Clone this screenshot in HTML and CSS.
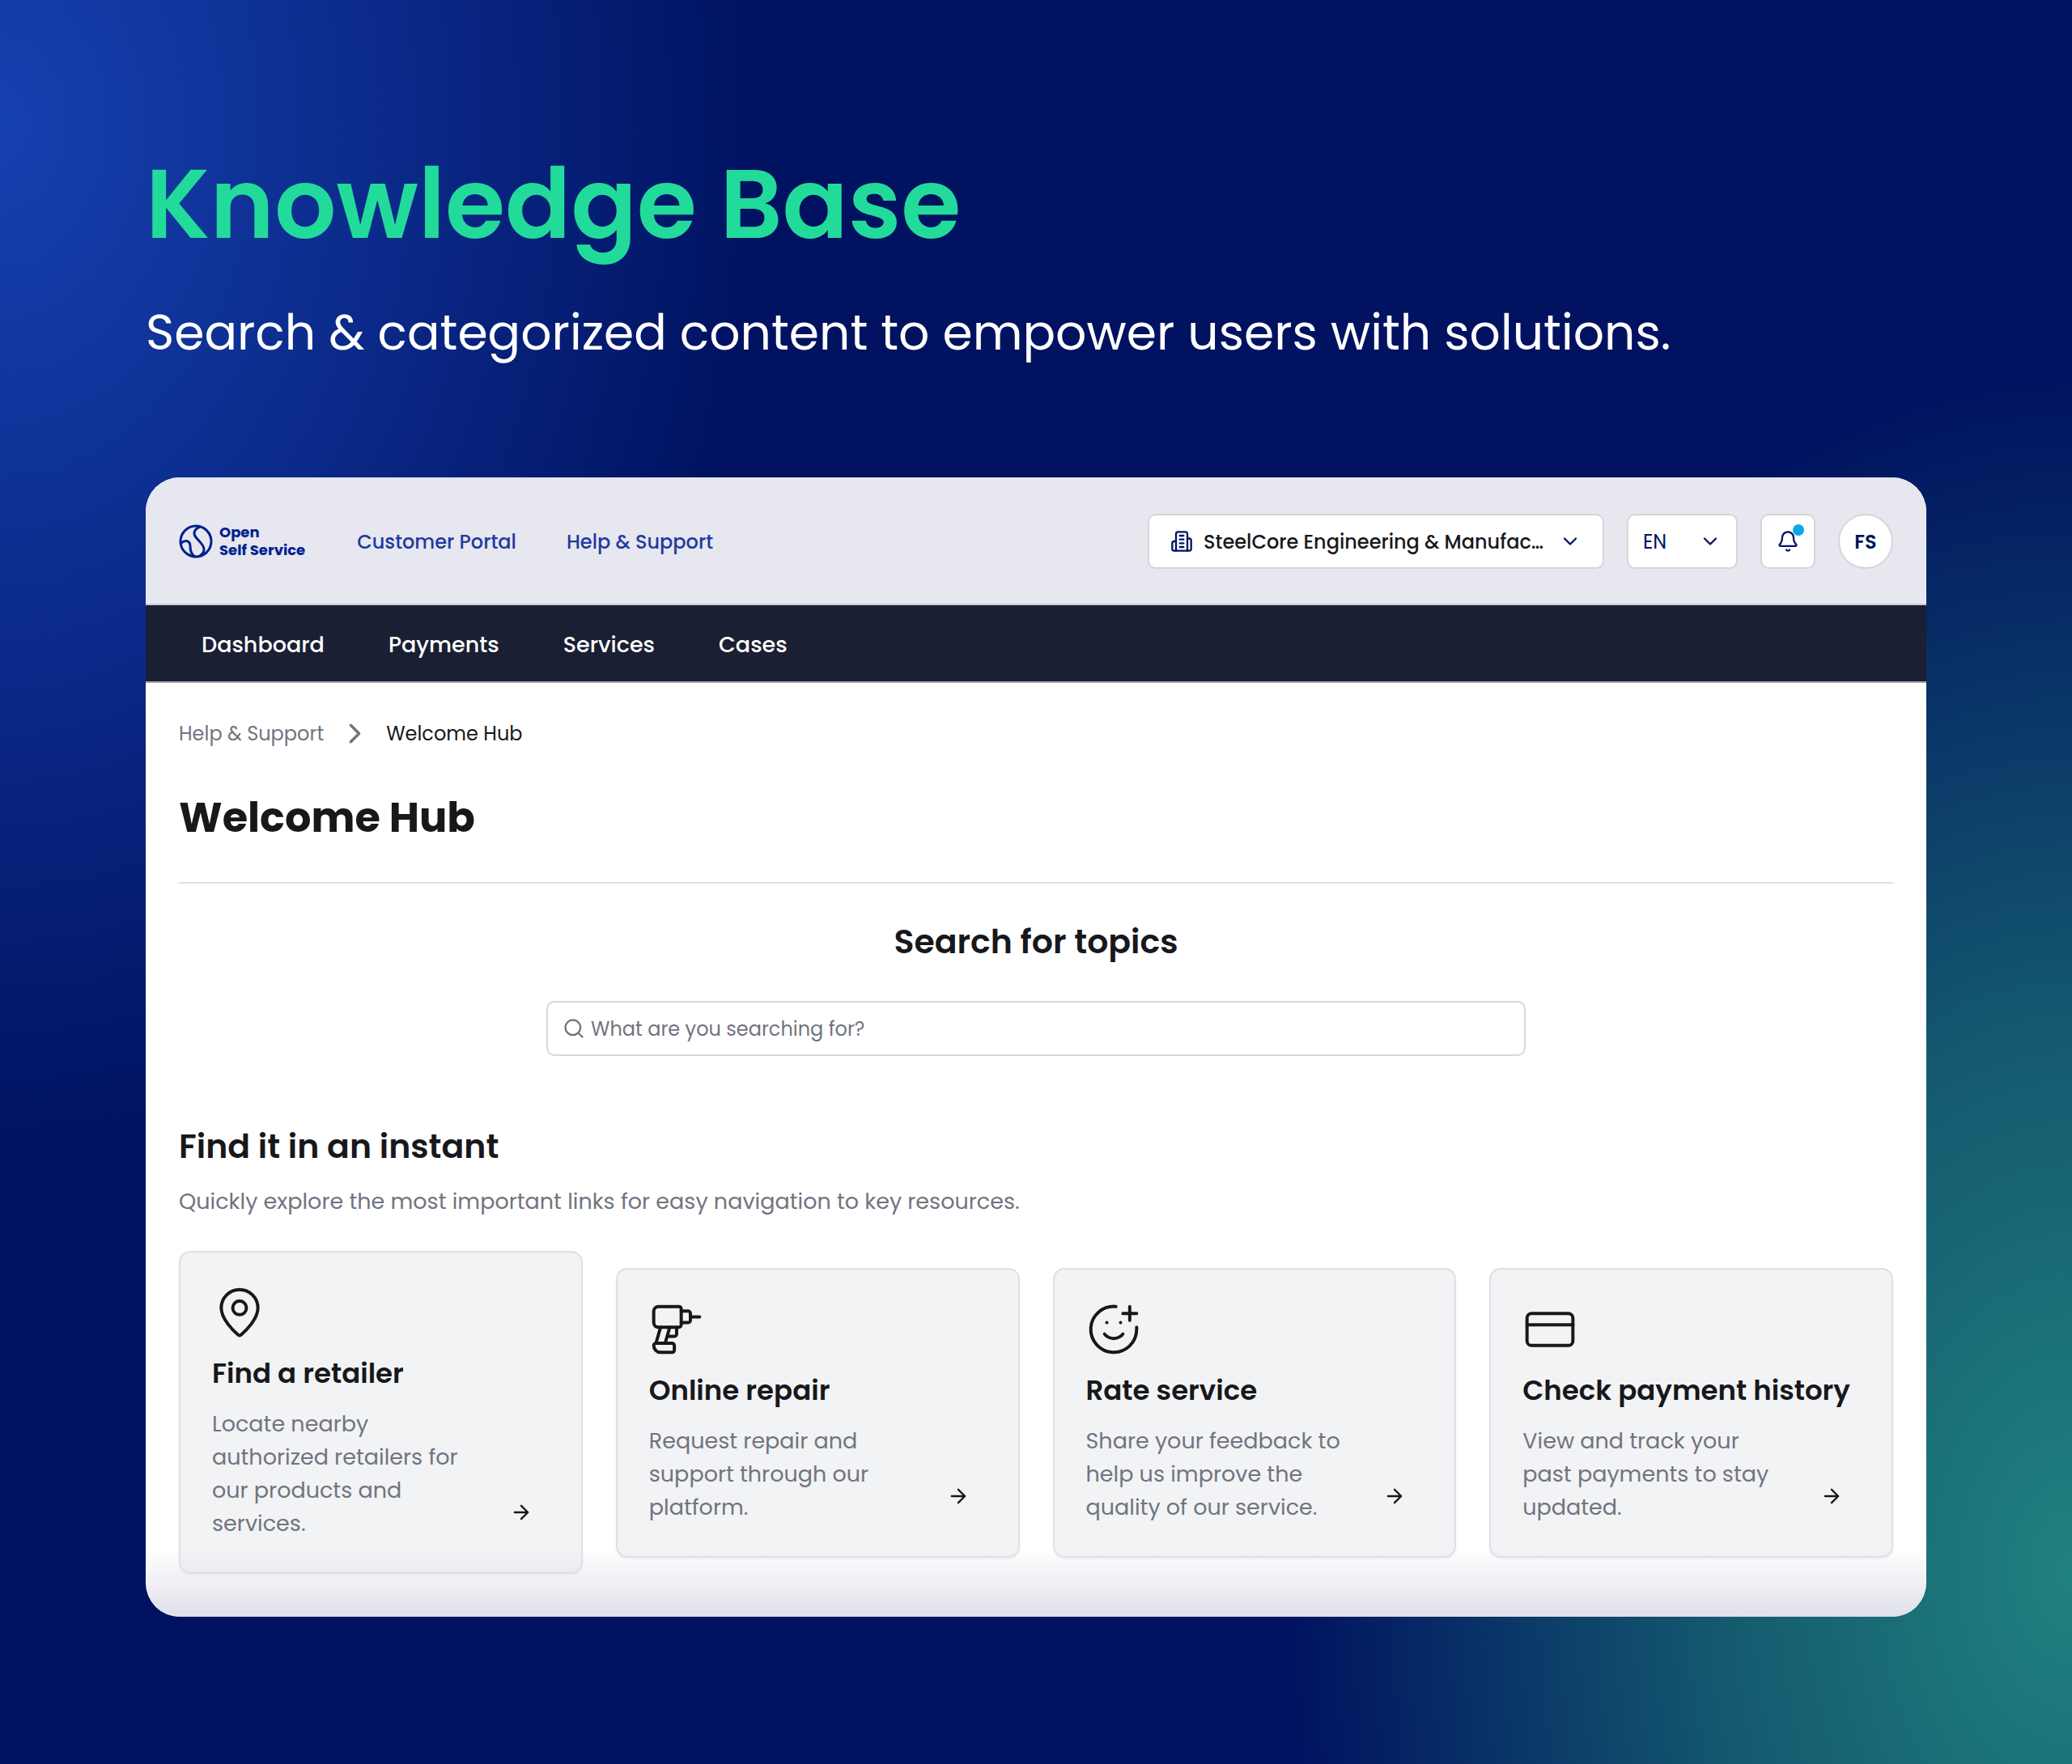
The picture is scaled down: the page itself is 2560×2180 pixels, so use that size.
FILE: index.html
```html
<!DOCTYPE html>
<html lang="en">
<head>
  <meta charset="utf-8">
  <meta name="viewport" content="width=device-width, initial-scale=1">
  <title>Knowledge Base</title>
  <link rel="stylesheet" href="styles.css">
</head>
<body>
  <header class="hero">
    <h1 class="hero-title">Knowledge Base</h1>
    <p class="hero-subtitle">Search &amp; categorized content to empower users with solutions.</p>
  </header>

  <div class="window">
    <div class="topbar">
      <a class="logo" href="#">
        <svg class="logo-mark" viewBox="0 0 42 42" aria-hidden="true">
          <circle cx="21" cy="21" r="19"/>
          <path d="M26 3c-7 3-9 8-5 13 4 5 10 9 10 15 0 3-1 5-4 7"/>
          <path d="M3 23c6-5 11-2 11 4 0 6 1 10 6 13"/>
        </svg>
        <span class="logo-text">Open<br>Self Service</span>
      </a>
      <nav class="portal-links" aria-label="Portal">
        <a href="#">Customer Portal</a>
        <a href="#">Help &amp; Support</a>
      </nav>
      <div class="tools">
        <label class="picker picker-company">
          <svg class="picker-icon" viewBox="0 0 24 24" aria-hidden="true">
            <path d="M6 22V4a2 2 0 0 1 2-2h8a2 2 0 0 1 2 2v18Z"/>
            <path d="M6 12H4a2 2 0 0 0-2 2v6a2 2 0 0 0 2 2h2"/>
            <path d="M18 9h2a2 2 0 0 1 2 2v9a2 2 0 0 1-2 2h-2"/>
            <path d="M10 6h4M10 10h4M10 14h4M10 18h4"/>
          </svg>
          <select aria-label="Company">
            <option>SteelCore Engineering &amp; Manufacturing</option>
          </select>
          <svg class="picker-arrow" viewBox="0 0 24 24" aria-hidden="true"><path d="m6 9 6 6 6-6"/></svg>
        </label>
        <label class="picker picker-language">
          <select aria-label="Language">
            <option>EN</option>
          </select>
          <svg class="picker-arrow" viewBox="0 0 24 24" aria-hidden="true"><path d="m6 9 6 6 6-6"/></svg>
        </label>
        <button class="bell" type="button" aria-label="Notifications">
          <svg class="bell-icon" viewBox="0 0 24 24" aria-hidden="true">
            <path d="M10.268 21a2 2 0 0 0 3.464 0"/>
            <path d="M3.262 15.326A1 1 0 0 0 4 17h16a1 1 0 0 0 .74-1.673C19.41 13.956 18 12.499 18 8A6 6 0 0 0 6 8c0 4.499-1.411 5.956-2.738 7.326"/>
          </svg>
          <span class="bell-dot"></span>
        </button>
        <button class="avatar" type="button">FS</button>
      </div>
    </div>

    <nav class="mainnav" aria-label="Main">
      <a href="#">Dashboard</a>
      <a href="#">Payments</a>
      <a href="#">Services</a>
      <a href="#">Cases</a>
    </nav>

    <main class="content">
      <nav class="breadcrumb" aria-label="Breadcrumb">
        <a href="#">Help &amp; Support</a>
        <svg class="breadcrumb-arrow" viewBox="0 0 24 24" aria-hidden="true"><path d="m9 18 6-6-6-6"/></svg>
        <span aria-current="page">Welcome Hub</span>
      </nav>
      <h2 class="page-title">Welcome Hub</h2>

      <form class="search">
        <label class="section-title" for="topic">Search for topics</label>
        <div class="search-box">
          <svg class="search-icon" viewBox="0 0 24 24" aria-hidden="true"><circle cx="11" cy="11" r="8"/><path d="m21 21-4.300-4.300"/></svg>
          <input id="topic" type="search" placeholder="What are you searching for?">
        </div>
      </form>

      <section class="links">
        <h3 class="section-title">Find it in an instant</h3>
        <p class="section-text">Quickly explore the most important links for easy navigation to key resources.</p>
        <div class="cards">
          <article class="card">
            <svg class="card-icon" viewBox="0 0 24 24" aria-hidden="true">
              <path d="M20 10c0 4.993-5.539 10.193-7.399 11.799a1 1 0 0 1-1.202 0C9.539 20.193 4 14.993 4 10a8 8 0 0 1 16 0"/>
              <circle cx="12" cy="10" r="3"/>
            </svg>
            <h4 class="card-title">Find a retailer</h4>
            <div class="card-body">
              <p>Locate nearby authorized retailers for our products and services.</p>
              <a class="card-go" href="#" aria-label="Find a retailer"><svg viewBox="0 0 24 24" aria-hidden="true"><path d="M5 12h14M12 5l7 7-7 7"/></svg></a>
            </div>
          </article>
          <article class="card">
            <svg class="card-icon" viewBox="0 0 24 24" aria-hidden="true">
              <path d="M4 2h9a1 1 0 0 1 1 1v7a1 1 0 0 1-1 1H4a2 2 0 0 1-2-2V4a2 2 0 0 1 2-2Z"/>
              <path d="M14 4h3a1 1 0 0 1 1 1v3a1 1 0 0 1-1 1h-3"/>
              <path d="M18 6.500h4"/>
              <path d="m5 11-2 7M9 11l-2 7M8.200 15H11a1 1 0 0 0 1-1v-3"/>
              <path d="M3 18h7a1 1 0 0 1 1 1v2a1 1 0 0 1-1 1H5a3 3 0 0 1-3-3 1 1 0 0 1 1-1Z"/>
            </svg>
            <h4 class="card-title">Online repair</h4>
            <div class="card-body">
              <p>Request repair and support through our platform.</p>
              <a class="card-go" href="#" aria-label="Online repair"><svg viewBox="0 0 24 24" aria-hidden="true"><path d="M5 12h14M12 5l7 7-7 7"/></svg></a>
            </div>
          </article>
          <article class="card">
            <svg class="card-icon" viewBox="0 0 24 24" aria-hidden="true">
              <path d="M22 11v1a10 10 0 1 1-9-10"/>
              <path d="M8 14s1.500 2 4 2 4-2 4-2"/>
              <path d="M9 9h.01M15 9h.01M16 5h6M19 2v6"/>
            </svg>
            <h4 class="card-title">Rate service</h4>
            <div class="card-body">
              <p>Share your feedback to help us improve the quality of our service.</p>
              <a class="card-go" href="#" aria-label="Rate service"><svg viewBox="0 0 24 24" aria-hidden="true"><path d="M5 12h14M12 5l7 7-7 7"/></svg></a>
            </div>
          </article>
          <article class="card">
            <svg class="card-icon" viewBox="0 0 24 24" aria-hidden="true">
              <rect x="2" y="5" width="20" height="14" rx="2"/>
              <path d="M2 10h20"/>
            </svg>
            <h4 class="card-title">Check payment history</h4>
            <div class="card-body">
              <p>View and track your past payments to stay updated.</p>
              <a class="card-go" href="#" aria-label="Check payment history"><svg viewBox="0 0 24 24" aria-hidden="true"><path d="M5 12h14M12 5l7 7-7 7"/></svg></a>
            </div>
          </article>
        </div>
      </section>
    </main>
  </div>
</body>
</html>
```

FILE: styles.css
```css
* {
  box-sizing: border-box;
  margin: 0;
}

html {
  min-height: 100%;
  background:
    radial-gradient(ellipse 37% 59% at 0% 7%, #1641b0 0%, #0b2a8a 50%, rgba(0, 18, 96, 0) 100%),
    radial-gradient(ellipse 38% 68% at 100% 89%, #208280 0%, #14596f 45%, rgba(0, 18, 96, 0) 100%),
    #001260;
}

body {
  padding: 180px 180px 184px;
  color: #18181b;
  font-family: Poppins, Inter, sans-serif;
  font-size: 27px;
  line-height: 41px;
}

a {
  color: inherit;
  text-decoration: none;
}

svg {
  display: block;
  flex: none;
  fill: none;
  stroke: currentColor;
  stroke-width: 2;
  stroke-linecap: round;
  stroke-linejoin: round;
}

button,
select,
input {
  color: inherit;
  font: inherit;
}

/* Hero */

.hero-title {
  color: #22db9a;
  font-size: 120px;
  font-weight: 600;
  line-height: 144px;
}

.hero-subtitle {
  margin-top: 39px;
  color: #fff;
  font-size: 60px;
  line-height: 96px;
}

/* Application window */

.window {
  position: relative;
  overflow: hidden;
  margin-top: 131px;
  border-radius: 42px;
  background: #fff;
}

.window::after {
  position: absolute;
  inset: auto 0 0;
  height: 84px;
  background: linear-gradient(rgba(224, 224, 234, 0), #e0e0ea);
  content: "";
  pointer-events: none;
}

.topbar {
  display: flex;
  align-items: center;
  height: 158px;
  padding: 2px 41px 0;
  border-bottom: 2px solid #c9cad6;
  background: #e6e7ef;
}

.logo {
  display: flex;
  align-items: center;
  gap: 8px;
  color: #001f8f;
}

.logo-mark {
  width: 42px;
  height: 42px;
  stroke-width: 3;
}

.logo-text {
  font-size: 18px;
  font-weight: 700;
  line-height: 22px;
}

.portal-links {
  display: flex;
  gap: 62px;
  margin-left: 64px;
  color: #1f3a9f;
  font-size: 24px;
  font-weight: 500;
}

.tools {
  display: flex;
  gap: 28px;
  margin-left: auto;
  color: #00145f;
  font-size: 24px;
}

.picker,
.bell,
.avatar {
  height: 68px;
  border: 2px solid #d5d6db;
  background: #fff;
}

.picker {
  display: flex;
  align-items: center;
  border-radius: 10px;
}

.picker select {
  flex: 1;
  min-width: 0;
  padding: 0;
  border: 0;
  appearance: none;
  background: none;
  outline: none;
  overflow: hidden;
  text-overflow: ellipsis;
  white-space: nowrap;
}

.picker-company {
  width: 564px;
  padding: 0 26px;
}

.picker-company select {
  color: #18181b;
  font-weight: 500;
}

.picker-language {
  width: 137px;
  padding: 0 18px;
}

.picker-icon {
  width: 28px;
  height: 28px;
  margin-right: 13px;
}

.picker-arrow {
  width: 28px;
  height: 28px;
  margin-left: 18px;
  pointer-events: none;
}

.bell {
  display: grid;
  position: relative;
  place-items: center;
  width: 68px;
  padding: 0;
  border-radius: 10px;
}

.bell-icon {
  width: 28px;
  height: 28px;
}

.bell-dot {
  position: absolute;
  top: 11px;
  right: 12px;
  width: 14px;
  height: 14px;
  border-radius: 50%;
  background: #0ea5e9;
}

.avatar {
  width: 68px;
  padding: 0;
  border-radius: 50%;
  font-weight: 600;
}

.mainnav {
  display: flex;
  gap: 79px;
  padding: 28px 69px 25px;
  border-bottom: 2px solid #a5a6b2;
  background: #1b1f33;
  color: #fff;
  font-weight: 500;
}

/* Content */

.content {
  padding: 42px 41px 53px;
}

.breadcrumb {
  display: flex;
  align-items: center;
  font-size: 24px;
}

.breadcrumb a {
  color: #71747f;
}

.breadcrumb-arrow {
  width: 41px;
  height: 41px;
  margin: 0 18px;
  color: #71747f;
}

.page-title {
  margin-top: 53px;
  padding-bottom: 50px;
  border-bottom: 2px solid #e0e1e5;
  font-size: 51px;
  font-weight: 700;
  line-height: 60px;
}

.section-title {
  font-size: 41px;
  font-weight: 600;
  line-height: 52px;
}

.search {
  display: flex;
  flex-direction: column;
  align-items: center;
  gap: 47px;
  margin-top: 46px;
}

.search-box {
  display: flex;
  align-items: center;
  gap: 7px;
  width: 100%;
  max-width: 1210px;
  height: 68px;
  padding: 0 18px;
  border: 2px solid #d5d6db;
  border-radius: 10px;
}

.search-icon {
  width: 28px;
  height: 28px;
  color: #71747f;
}

.search-box input {
  flex: 1;
  min-width: 0;
  padding: 0;
  border: 0;
  outline: none;
  background: none;
  font-size: 24px;
}

.search-box input::placeholder {
  color: #71747f;
  opacity: 1;
}

.links {
  margin-top: 86px;
}

.section-text {
  margin-top: 21px;
  color: #71747f;
}

.cards {
  display: grid;
  grid-template-columns: repeat(4, minmax(0, 1fr));
  align-items: center;
  gap: 41px;
  margin-top: 41px;
}

.card {
  padding: 40px 40px 40px 39px;
  border: 2px solid #dfe0e6;
  border-radius: 14px;
  background: #f2f3f5;
  box-shadow: 0 2px 3px rgba(0, 0, 0, 0.05);
}

.card-icon {
  width: 68px;
  height: 68px;
  stroke-width: 1.4;
}

.card-title {
  margin-top: 17px;
  font-size: 34px;
  font-weight: 600;
  line-height: 48px;
  white-space: nowrap;
}

.card-body {
  display: flex;
  align-items: flex-end;
  gap: 20px;
  margin-top: 18px;
}

.card-body p {
  flex: 1;
  color: #71747f;
}

.card-go {
  display: grid;
  place-items: center;
  width: 68px;
  height: 68px;
}

.card-go svg {
  width: 28px;
  height: 28px;
}
```
